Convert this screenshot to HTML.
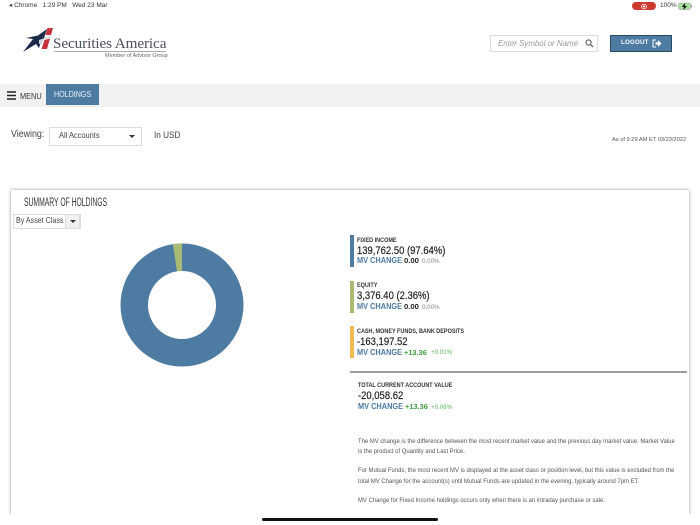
<!DOCTYPE html>
<html><head><meta charset="utf-8"><style>
html,body{margin:0;padding:0;background:#fff}
#p{position:relative;width:700px;height:525px;overflow:hidden;font-family:"Liberation Sans",sans-serif;color:#333}
.t{position:absolute;white-space:nowrap;line-height:1;transform-origin:0 0}
.b{position:absolute;left:350px;width:4px}
.h{font-size:6.2px;font-weight:bold;color:#333;left:357px;transform:scaleX(.885)}
.v{font-size:11px;color:#222;left:357px;transform:scaleX(.86);-webkit-text-stroke:.2px #222}
.m{font-size:8.2px;font-weight:bold;color:#4d7ba1;left:357px;transform:scaleX(.9)}
.z{font-size:7.7px;font-weight:bold;color:#222}
.g{font-size:7.4px;font-weight:bold;color:#3f9e3f}
.s{font-size:6.2px;color:#888}
.sg{font-size:6.2px;color:#5cb85c}
.n{font-size:6.5px;color:#555;left:358px;transform:scaleX(.91)}
</style></head><body><div id="p">
<div class="t" style="left:9px;top:3px;font-size:6.5px;color:#333">◂ Chrome &nbsp; 1:29 PM &nbsp; Wed 23 Mar</div>
<div style="position:absolute;left:632px;top:2px;width:24px;height:8px;border-radius:4px;background:#cc3a30"></div>
<svg style="position:absolute;left:640px;top:2.500px" width="8" height="8"><circle cx="4" cy="3.500" r="2.400" fill="none" stroke="#fff" stroke-width=".8"/><circle cx="4" cy="3.500" r="1" fill="#fff"/></svg>
<div class="t" style="left:660px;top:3px;font-size:6.5px;color:#333">100%</div>
<svg style="position:absolute;left:678px;top:2px" width="15" height="9"><rect x=".5" y="1" width="12" height="6.500" rx="1.500" fill="#a6dc9c" stroke="#999" stroke-width=".5"/><rect x="13" y="3" width="1" height="2.500" fill="#999"/><path d="M7 1 3.800 5H6L5.500 8 9 4H6.800Z" fill="#111"/></svg>

<svg style="position:absolute;left:22px;top:26px" width="34" height="27" viewBox="0 0 34 27"><path d="M1 26 11 13 4 12 16 9.500 25 3 22 12 19 16 17 22 14 18Z" fill="#1c2a4a"/><path d="M25.500 2H31L29 9H23.500ZM22.500 14 28 12.500 25 23H19.500Z" fill="#c8323c"/><path d="M17 14 30 9.500 28 11.500 21 14 20 18H17Z" fill="#cfd3da"/></svg>
<div class="t" style="left:53px;top:36px;font-family:'Liberation Serif',serif;font-size:15.2px;color:#4b5060;letter-spacing:-.1px">Securities America</div>
<div style="position:absolute;left:54px;top:51px;width:112px;height:1px;background:#aaa"></div>
<div class="t" style="left:105px;top:54px;font-size:5.5px;color:#666">Member of Advisor Group</div>

<div style="position:absolute;left:490px;top:35px;width:106px;height:15px;border:1px solid #ddd;background:#fff"></div>
<div class="t" style="left:498px;top:39px;font-size:8.6px;font-style:italic;color:#999;transform:scaleX(.92)">Enter Symbol or Name</div>
<svg style="position:absolute;left:585px;top:39px" width="9" height="9"><circle cx="3.500" cy="3.500" r="2.600" fill="none" stroke="#555" stroke-width="1"/><path d="M5.500 5.500 8 8" stroke="#555" stroke-width="1.200"/></svg>
<div style="position:absolute;left:610px;top:35px;width:60px;height:15px;background:#4d7ba1;border:1px solid #2f4a63"></div>
<div class="t" style="left:621px;top:40px;font-size:6.8px;font-weight:bold;color:#fff;letter-spacing:.2px;transform:scaleX(.91)">LOGOUT</div>
<svg style="position:absolute;left:652px;top:39px" width="10" height="10"><path d="M4 1H1V8H4" fill="none" stroke="#fff" stroke-width="1"/><path d="M3.500 3.200H6V1L9.500 4.500 6 8V5.800H3.500Z" fill="#fff"/></svg>

<div style="position:absolute;left:0;top:84px;width:700px;height:23px;background:#f1f1f1"></div>
<svg style="position:absolute;left:7px;top:91px" width="10" height="9"><path d="M0 1H9M0 4.500H9M0 8H9" stroke="#222" stroke-width="1.400"/></svg>
<div class="t" style="left:20px;top:93px;font-size:8.2px;color:#333;transform:scaleX(.9)">MENU</div>
<div style="position:absolute;left:46px;top:84px;width:53px;height:21px;background:#4d7ba1"></div>
<div class="t" style="left:54px;top:90.500px;font-size:8px;color:#eef3f7;transform:scaleX(.89)">HOLDINGS</div>

<div class="t" style="left:11px;top:130px;font-size:10.4px;color:#444;transform:scaleX(.85)">Viewing:</div>
<div style="position:absolute;left:49px;top:127px;width:91px;height:17px;border:1px solid #ddd;background:#fff"></div>
<div class="t" style="left:59px;top:131px;font-size:8.4px;color:#444;transform:scaleX(.89)">All Accounts</div>
<div style="position:absolute;left:129px;top:135px;border:3px solid transparent;border-top:3px solid #333"></div>
<div class="t" style="left:154px;top:130.500px;font-size:9.2px;color:#444;transform:scaleX(.89)">In USD</div>
<div class="t" style="left:612px;top:138px;font-size:5.7px;color:#555">As of 9:29 AM ET 03/23/2022</div>

<div style="position:absolute;left:11px;top:190px;width:678px;height:330px;background:#fff;box-shadow:0 0 3px rgba(0,0,0,.45)"></div>
<div class="t" style="left:23.500px;top:198px;font-size:11.5px;color:#333;transform:scaleX(.59)">SUMMARY OF HOLDINGS</div>
<div style="position:absolute;left:13px;top:214px;width:66px;height:13px;border:1px solid #ddd;background:#fff"></div>
<div style="position:absolute;left:65px;top:214px;width:15px;height:15px;background:#f0f0f0;border:0;box-shadow:inset 0 0 0 1px #ddd"></div>
<div class="t" style="left:16px;top:217px;font-size:8px;color:#444;transform:scaleX(.89)">By Asset Class</div>
<div style="position:absolute;left:69.500px;top:220px;border:3px solid transparent;border-top:3px solid #333"></div>

<svg style="position:absolute;left:114.500px;top:238px" width="134" height="134" viewBox="-67 -67 134 134">
<circle r="61.500" fill="#4d7ba1"/>
<path d="M0 -61.500 L-9.100 -60.800 L-5 -33.600 L0 -34Z" fill="#a9bb72"/>
<circle r="34" fill="#fff"/></svg>

<div class="b" style="top:235px;height:32px;background:#4d7ba1"></div>
<div class="t h" style="top:237.500px">FIXED INCOME</div>
<div class="t v" style="top:245.500px">139,762.50 (97.64%)</div>
<div class="t m" style="top:257px">MV CHANGE</div>
<div class="t z" style="left:404px;top:257.300px">0.00</div>
<div class="t s" style="left:422px;top:259px">0.00%</div>

<div class="b" style="top:281px;height:32px;background:#a9bb72"></div>
<div class="t h" style="top:283px">EQUITY</div>
<div class="t v" style="top:291px">3,376.40 (2.36%)</div>
<div class="t m" style="top:303px">MV CHANGE</div>
<div class="t z" style="left:404px;top:303.300px">0.00</div>
<div class="t s" style="left:422px;top:305px">0.00%</div>

<div class="b" style="top:326px;height:32px;background:#edbb4f"></div>
<div class="t h" style="top:328.500px">CASH, MONEY FUNDS, BANK DEPOSITS</div>
<div class="t v" style="top:336.500px">-163,197.52</div>
<div class="t m" style="top:348.500px">MV CHANGE</div>
<div class="t g" style="left:404px;top:348.500px">+13.36</div>
<div class="t sg" style="left:431px;top:350px">+0.01%</div>

<div style="position:absolute;left:350px;top:371px;width:337px;height:2px;background:#9a9fa3"></div>
<div class="t h" style="left:358px;top:382.500px">TOTAL CURRENT ACCOUNT VALUE</div>
<div class="t v" style="left:358px;top:390.500px">-20,058.62</div>
<div class="t m" style="left:358px;top:403px">MV CHANGE</div>
<div class="t g" style="left:405px;top:403px">+13.36</div>
<div class="t sg" style="left:431px;top:405px">+0.06%</div>

<div class="t n" style="top:438.700px">The MV change is the difference between the most recent market value and the previous day market value. Market Value</div>
<div class="t n" style="top:449.200px">is the product of Quantity and Last Price.</div>
<div class="t n" style="top:468.200px">For Mutual Funds, the most recent MV is displayed at the asset class or position level, but this value is excluded from the</div>
<div class="t n" style="top:478.700px">total MV Change for the account(s) until Mutual Funds are updated in the evening, typically around 7pm ET.</div>
<div class="t n" style="top:497.700px">MV Change for Fixed Income holdings occurs only when there is an intraday purchase or sale.</div>

<div style="position:absolute;left:0;top:514px;width:700px;height:11px;background:#fff"></div>
<div style="position:absolute;left:262px;top:518px;width:176px;height:3px;border-radius:2px;background:#111"></div>
</div></body></html>
